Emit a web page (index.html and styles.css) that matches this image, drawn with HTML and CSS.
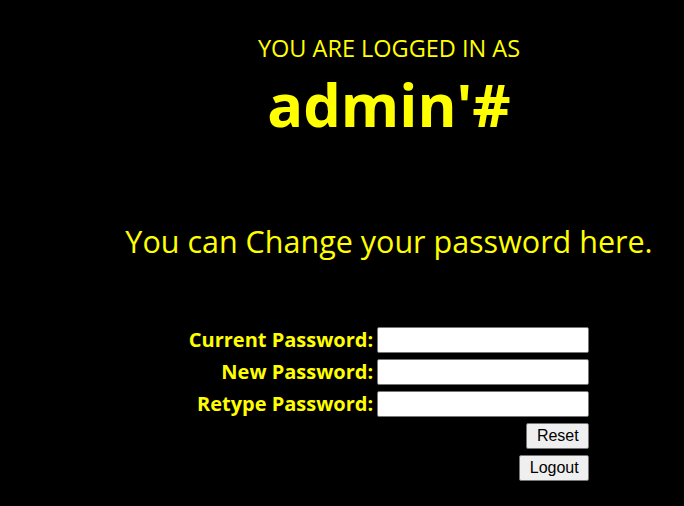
FILE: index.html
```html
<!DOCTYPE html>
<html lang="en">
<head>
  <meta charset="UTF-8" />
  <title>Change Password</title>
  <link rel="stylesheet" href="styles.css">
</head>
<body>
  <div class="page">
    <div class="logged">YOU ARE LOGGED IN AS</div>
    <h1 class="user">admin'#</h1>
    <h2 class="intro">You can Change your password here.</h2>

    <form class="pass-form" onsubmit="return false">
      <label for="current">Current Password:</label>
      <input type="password" id="current" />
      <label for="newpass">New Password:</label>
      <input type="password" id="newpass" />
      <label for="retype">Retype Password:</label>
      <input type="password" id="retype" />
      <button type="reset" class="btn">Reset</button>
      <button type="button" class="btn">Logout</button>
    </form>
  </div>
</body>
</html>
```

FILE: styles.css
```css
body {
  margin: 0;
  background: #000;
  color: #ffff00;
  font-family: "Open Sans", "Noto Sans", sans-serif;
}

.page {
  margin-left: 94px;
  text-align: center;
}

.logged {
  padding-top: 36px;
  font-size: 23.5px;
  line-height: 24px;
}

.user {
  margin: 12px 0 0;
  font-size: 59.5px;
  line-height: 64px;
  font-weight: 700;
}

.intro {
  margin: 85px 0 0;
  font-size: 30.5px;
  line-height: 40px;
  font-weight: 400;
}

.pass-form {
  display: grid;
  grid-template-columns: auto 212px;
  justify-content: center;
  column-gap: 4px;
  row-gap: 6px;
  margin-top: 66px;
}

.pass-form label {
  text-align: right;
  font-size: 20px;
  font-weight: 700;
  line-height: 26px;
}

.pass-form input {
  box-sizing: border-box;
  width: 212px;
  height: 26px;
  margin: 0;
  border: 1px solid #767676;
  border-radius: 2px;
  background: #fff;
}

.btn {
  grid-column: 2;
  justify-self: end;
  height: 26px;
  padding: 3px 9.5px;
  border: 1px solid #767676;
  border-radius: 2px;
  background: #efefef;
  color: #000;
  font-family: "Liberation Sans", Arial, sans-serif;
  font-size: 16px;
  line-height: 18px;
}
```
